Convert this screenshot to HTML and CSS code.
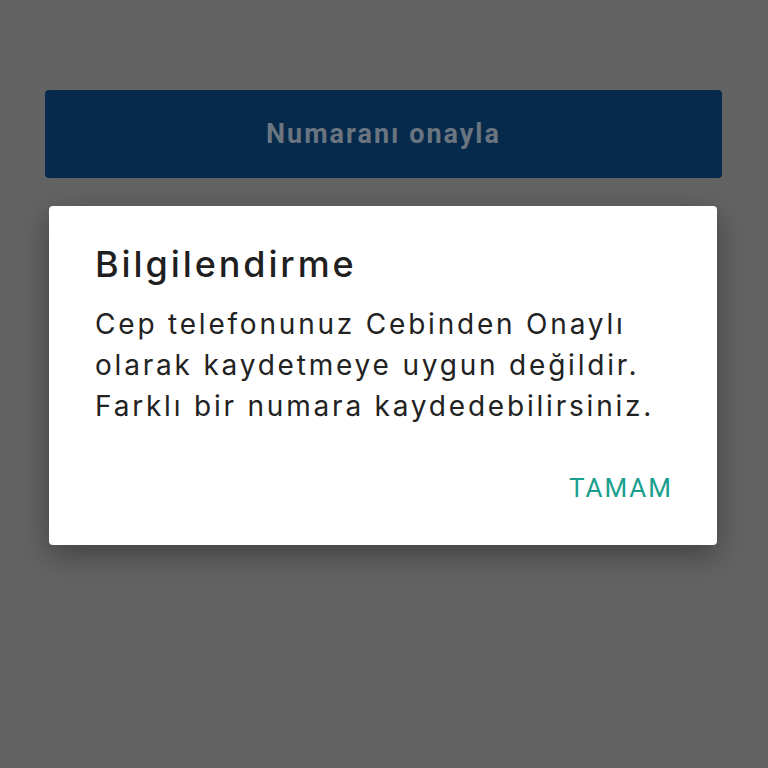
FILE: index.html
```html
<!DOCTYPE html>
<html lang="tr">
<head>
    <meta charset="UTF-8">
    <meta name="viewport" content="width=device-width, initial-scale=1.0">
    <title>Numara onayı</title>
    <link rel="stylesheet" href="styles.css">
</head>
<body>
    <div class="screen">
        <button class="confirm" disabled>Numaranı onayla</button>

        <div class="dialog">
            <h1 class="dialog-title">Bilgilendirme</h1>
            <p class="dialog-text">Cep telefonunuz Cebinden Onaylı olarak kaydetmeye uygun değildir. Farklı bir numara kaydedebilirsiniz.</p>
            <div class="dialog-actions">
                <button class="dialog-btn">TAMAM</button>
            </div>
        </div>
    </div>
</body>
</html>
```

FILE: styles.css
```css
*{
    box-sizing: border-box;
}

html,body{
    margin: 0;
    padding: 0;
    height: 100%;
    background-color: #636363;
}

.screen{
    display: flex;
    flex-direction: column;
    padding: 90px 46px 0 45px;
}

.confirm{
    height: 88px;
    border: none;
    border-radius: 4px;
    background-color: #062a4c;
    color: #6a7580;
    font-family: Roboto, "Liberation Sans", sans-serif;
    font-weight: 700;
    font-size: 27px;
    letter-spacing: 2px;
}

.dialog{
    margin: 28px 5px 0 4px;
    padding: 36px 40px 42px 46px;
    background-color: #fff;
    border-radius: 4px;
    box-shadow: 0 10px 30px rgba(0, 0, 0, 0.35);
}

.dialog-title{
    margin: 0;
    font-family: Inter, "Noto Sans", sans-serif;
    font-weight: 500;
    font-size: 36px;
    line-height: 44px;
    letter-spacing: 2.9px;
    color: #1f1f1f;
}

.dialog-text{
    margin: 18px 0 0;
    font-family: Inter, "Noto Sans", sans-serif;
    font-size: 28px;
    line-height: 41px;
    letter-spacing: 2.8px;
    color: #222;
}

.dialog-actions{
    display: flex;
    justify-content: flex-end;
    margin-top: 46px;
    padding-right: 4px;
}

.dialog-btn{
    border: none;
    background: none;
    padding: 0;
    font-family: Roboto, "Noto Sans", sans-serif;
    font-size: 26px;
    letter-spacing: 2px;
    color: #1a9e8e;
}
```
